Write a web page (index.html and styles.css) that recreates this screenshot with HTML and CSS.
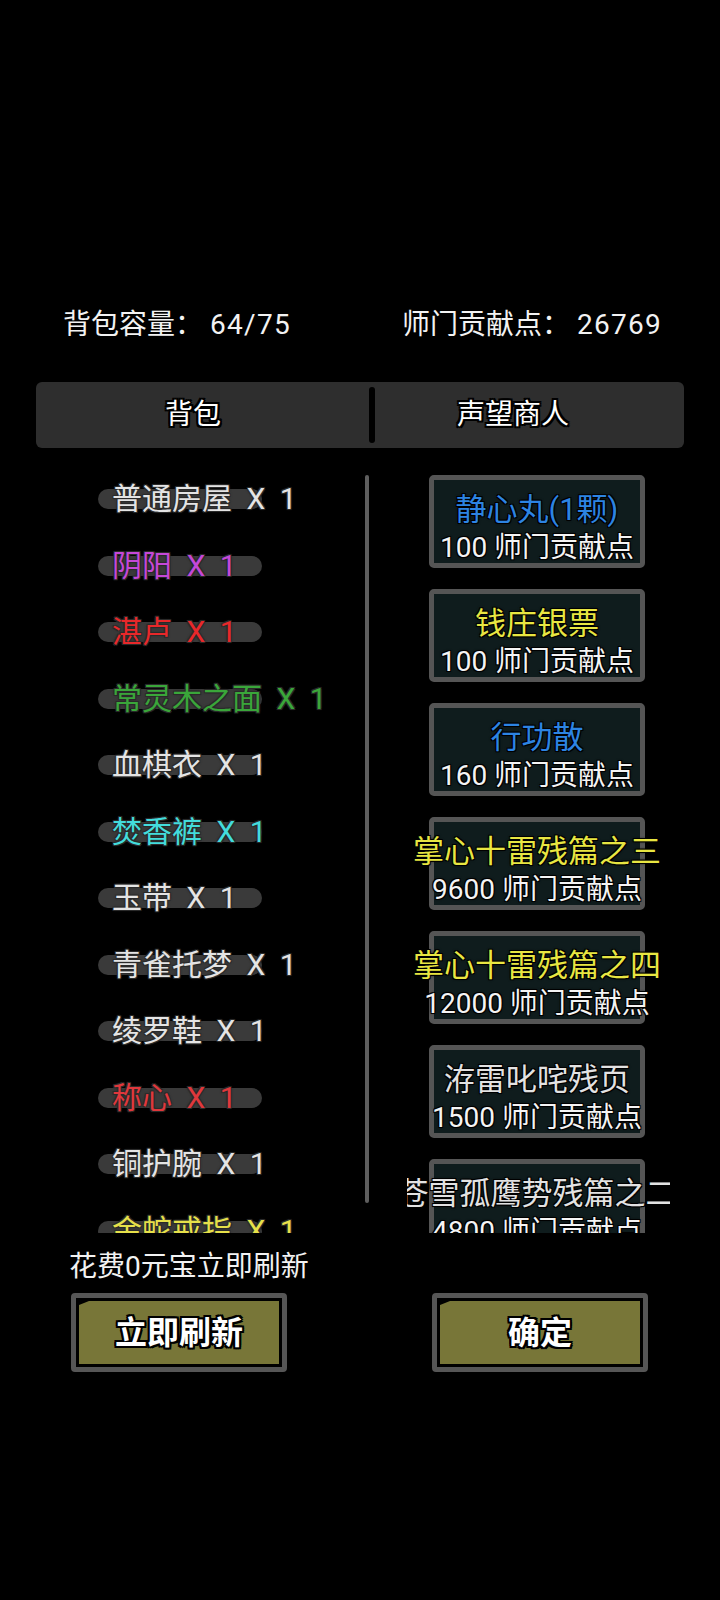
FILE: index.html
```html
<!DOCTYPE html>
<html lang="zh-CN">
<head>
<meta charset="utf-8">
<title>声望商人</title>
<link rel="stylesheet" href="styles.css">
</head>
<body>
<div class="screen">
  <div class="stats">
    <div class="stat">背包容量： <span class="val">64/75</span></div>
    <div class="stat">师门贡献点： <span class="val">26769</span></div>
  </div>

  <div class="tabs">
    <div class="tab tab-bag"><span class="tab-label">背包</span></div>
    <div class="tab-divider"></div>
    <div class="tab tab-shop"><span class="tab-label">声望商人</span></div>
  </div>

  <div class="content">
    <div class="bag">
      <div class="item"><div class="pill"></div><div class="name c-white">普通房屋 X 1</div></div>
      <div class="item"><div class="pill"></div><div class="name c-purple">阴阳 X 1</div></div>
      <div class="item"><div class="pill"></div><div class="name c-red">湛卢 X 1</div></div>
      <div class="item"><div class="pill"></div><div class="name c-green">常灵木之面 X 1</div></div>
      <div class="item"><div class="pill"></div><div class="name c-white">血棋衣 X 1</div></div>
      <div class="item"><div class="pill"></div><div class="name c-cyan">焚香裤 X 1</div></div>
      <div class="item"><div class="pill"></div><div class="name c-white">玉带 X 1</div></div>
      <div class="item"><div class="pill"></div><div class="name c-white">青雀托梦 X 1</div></div>
      <div class="item"><div class="pill"></div><div class="name c-white">绫罗鞋 X 1</div></div>
      <div class="item"><div class="pill"></div><div class="name c-red2">称心 X 1</div></div>
      <div class="item"><div class="pill"></div><div class="name c-white">铜护腕 X 1</div></div>
      <div class="item"><div class="pill"></div><div class="name c-yellow">金蛇戒指 X 1</div></div>
    </div>

    <div class="scrollbar"></div>

    <div class="shop">
      <div class="card"><div class="title t-blue">静心丸(1颗)</div><div class="price">100 师门贡献点</div></div>
      <div class="card"><div class="title t-yellow">钱庄银票</div><div class="price">100 师门贡献点</div></div>
      <div class="card"><div class="title t-blue">行功散</div><div class="price">160 师门贡献点</div></div>
      <div class="card"><div class="title t-yellow">掌心十雷残篇之三</div><div class="price">9600 师门贡献点</div></div>
      <div class="card"><div class="title t-yellow">掌心十雷残篇之四</div><div class="price">12000 师门贡献点</div></div>
      <div class="card"><div class="title t-white">洊雷叱咤残页</div><div class="price">1500 师门贡献点</div></div>
      <div class="card"><div class="title t-white">苍雪孤鹰势残篇之二</div><div class="price">4800 师门贡献点</div></div>
    </div>
  </div>

  <div class="refresh-note">花费0元宝立即刷新</div>

  <div class="actions">
    <button class="btn" type="button"><span class="btn-face">立即刷新</span></button>
    <button class="btn" type="button"><span class="btn-face">确定</span></button>
  </div>
</div>
</body>
</html>
```

FILE: styles.css
```css
html, body {
  margin: 0;
  padding: 0;
  background: #000;
}

body {
  font-family: Roboto, "Noto Sans CJK SC", sans-serif;
  color: #f0f0f0;
}

.screen {
  width: 720px;
  height: 1600px;
  padding-top: 300px;
  box-sizing: border-box;
  overflow: hidden;
}

/* ---------- stats ---------- */
.stats {
  display: grid;
  grid-template-columns: 339px auto;
  padding-left: 63px;
  height: 50px;
  align-items: center;
  font-size: 28px;
  line-height: 50px;
  color: #f2f2f2;
  white-space: nowrap;
}

.val {
  letter-spacing: 1.3px;
}

/* ---------- tabs ---------- */
.tabs {
  display: flex;
  margin: 32px 36px 0;
  height: 66px;
  background: #2e2e2e;
  border-radius: 6px;
}

.tab {
  display: flex;
  align-items: center;
  justify-content: center;
  box-sizing: border-box;
}

.tab-bag {
  width: 333px;
  padding-right: 19px;
}

.tab-shop {
  flex: 1;
  padding-right: 33px;
}

.tab-label {
  font-size: 28px;
  line-height: 40px;
  color: #fff;
  text-shadow:
    -2px -2px 0 #000, 0 -2px 0 #000, 2px -2px 0 #000,
    -2px 0 0 #000, 2px 0 0 #000,
    -2px 2px 0 #000, 0 2px 0 #000, 2px 2px 0 #000;
}

.tab-divider {
  width: 6px;
  height: 56px;
  margin-top: 5px;
  background: #000;
  border-radius: 3px;
}

/* ---------- content ---------- */
.content {
  display: flex;
  margin-top: 18px;
  height: 767px;
}

.bag {
  width: 365px;
  height: 100%;
  padding-left: 98px;
  box-sizing: border-box;
  overflow: hidden;
}

.item {
  display: grid;
  height: 66.5px;
  align-items: center;
}

.pill,
.name {
  grid-area: 1 / 1;
}

.pill {
  width: 164px;
  height: 20px;
  border-radius: 10px;
  background: #3a3a3a;
}

.name {
  margin-left: 14px;
  font-size: 30px;
  line-height: 40px;
  word-spacing: 7px;
  white-space: nowrap;
  text-shadow:
    -1px -1px 0 #2a2a2a, 1px -1px 0 #2a2a2a,
    -1px 1px 0 #2a2a2a, 1px 1px 0 #2a2a2a,
    0 0 3px #222;
}

.c-white { color: #e4e4e4; }
.c-purple { color: #c548d8; }
.c-red { color: #e8282a; }
.c-green { color: #3aa63a; }
.c-cyan { color: #43dcdc; }
.c-red2 { color: #e0383c; }
.c-yellow { color: #e6e04a; }

.scrollbar {
  width: 4px;
  height: 728px;
  margin-top: 9px;
  background: #5e5e5e;
  border-radius: 2px;
}

.shop {
  width: 263px;
  height: 100%;
  margin-left: 38px;
  padding-top: 9px;
  box-sizing: border-box;
  overflow: hidden;
}

.card {
  width: 216px;
  height: 93px;
  margin: 0 0 21px 22px;
  box-sizing: border-box;
  border: 5px solid #555;
  border-radius: 5px;
  background: #0f1c1d;
  padding-top: 13px;
  display: flex;
  flex-direction: column;
  align-items: center;
}

.title,
.price {
  display: flex;
  justify-content: center;
  width: 100%;
  white-space: nowrap;
  text-shadow:
    -1px -1px 0 #000, 1px -1px 0 #000,
    -1px 1px 0 #000, 1px 1px 0 #000,
    0 0 3px #000;
}

.title {
  font-size: 31px;
  line-height: 34px;
}

.price {
  margin-top: 4px;
  font-size: 28px;
  line-height: 34px;
  color: #f4f4f4;
}

.t-blue { color: #2d84e2; }
.t-yellow { color: #e8e642; }
.t-white { color: #e2e2e2; }

/* ---------- bottom ---------- */
.refresh-note {
  margin-top: 17px;
  padding-left: 69px;
  font-size: 28px;
  line-height: 34px;
  color: #f2f2f2;
  white-space: nowrap;
}

.actions {
  display: flex;
  gap: 145px;
  margin-top: 9px;
  padding-left: 71px;
}

.btn {
  appearance: none;
  margin: 0;
  width: 216px;
  height: 79px;
  padding: 3px;
  box-sizing: border-box;
  border: 5px solid #565656;
  border-radius: 4px;
  background: #000;
  font: inherit;
  cursor: pointer;
  display: flex;
}

.btn-face {
  flex: 1;
  display: flex;
  align-items: center;
  justify-content: center;
  background: #787638;
  clip-path: polygon(0 4px, 10px 0, 100% 0, 100% 100%, 0 100%);
  font-family: Roboto, "Noto Sans CJK SC", sans-serif;
  font-size: 32px;
  font-weight: 700;
  line-height: 40px;
  color: #fff;
  text-shadow:
    -2px -2px 0 #000, 0 -2px 0 #000, 2px -2px 0 #000,
    -2px 0 0 #000, 2px 0 0 #000,
    -2px 2px 0 #000, 0 2px 0 #000, 2px 2px 0 #000;
}
```
